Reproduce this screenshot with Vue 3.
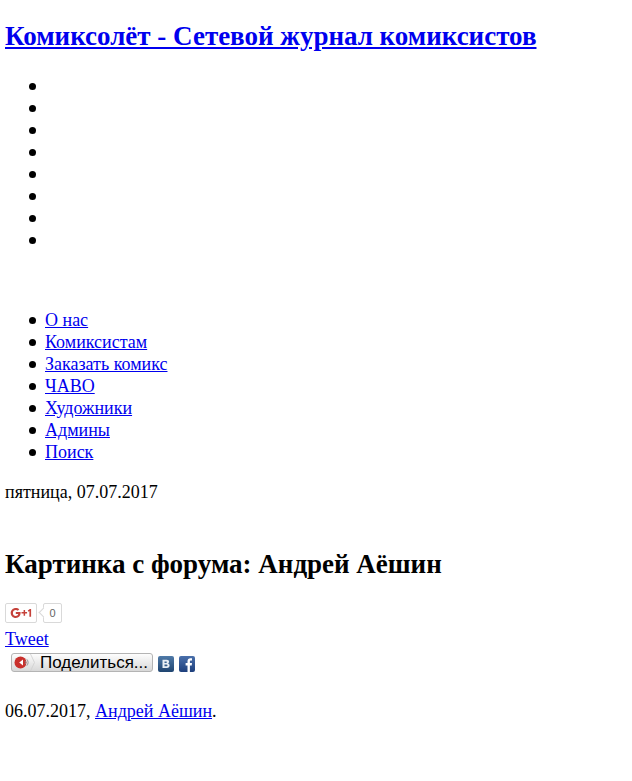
<script setup>
const navItems = ['О нас', 'Комиксистам', 'Заказать комикс', 'ЧАВО', 'Художники', 'Админы', 'Поиск']
const emptyItems = 8
</script>

<template>
  <div class="page">
    <h1 class="site-title"><a href="#">Комиксолёт - Сетевой журнал комиксистов</a></h1>

    <ul class="list list--empty">
      <li v-for="n in emptyItems" :key="n"></li>
    </ul>

    <ul class="list list--nav">
      <li v-for="item in navItems" :key="item"><a href="#">{{ item }}</a></li>
    </ul>

    <p class="date">пятница, 07.07.2017</p>

    <h2 class="post-title">Картинка с форума: Андрей Аёшин</h2>

    <div class="gplus">
      <span class="gplus-btn">
        <svg width="22" height="12" viewBox="0 0 22 12">
          <path d="M10.500 5H5.800v2.100h2.500C8 8.300 7 9 5.800 9 4.100 9 2.900 7.700 2.900 6S4.100 3 5.800 3c.8 0 1.500.3 2 .8l1.500-1.500C8.400 1.500 7.200 1 5.800 1 3 1 .7 3.200.7 6s2.300 5 5.100 5c3 0 4.800-2 4.800-4.900 0-.4 0-.7-.1-1.100z" fill="#c5413a"/>
          <path d="M11.500 5.100h2.100V3h1.500v2.100h2v1.500h-2v2.100h-1.500V6.600h-2.100z" fill="#c5413a"/>
          <path d="M17.800 3.400l2.100-1.300h1.200v7.700h-1.700V4.100l-1.100.7z" fill="#c5413a"/>
        </svg>
      </span>
      <span class="gplus-count">0</span>
    </div>

    <div class="tweet"><a href="#">Tweet</a></div>

    <div class="share">
      <span class="share-btn">
        <span class="share-logo">
          <svg width="24" height="17" viewBox="0 0 24 17">
            <circle cx="8.500" cy="8.500" r="6" fill="#c9302c"/>
            <path d="M11 5.500L7.200 8.500l3.800 3z" fill="#fff"/>
            <path d="M13 6.800a2.400 2.400 0 0 1 0 3.400M14.800 5.300a4.600 4.600 0 0 1 0 6.400" fill="none" stroke="#8a8a8a" stroke-width=".9"/>
            <path d="M18.500 0l4 8.500-4 8.500" fill="none" stroke="#cfcfcf" stroke-width=".8"/>
          </svg>
        </span>
        <span class="share-text">Поделиться...</span>
      </span>
      <svg class="soc" width="16" height="16" viewBox="0 0 16 16">
        <defs>
          <linearGradient id="vk" x1="0" y1="0" x2="0" y2="1">
            <stop offset="0" stop-color="#4f7aa8"/>
            <stop offset="1" stop-color="#1f4470"/>
          </linearGradient>
        </defs>
        <rect width="16" height="16" rx="2" fill="url(#vk)"/>
        <path d="M4.500 3.800h4.300c1.500 0 2.300.8 2.300 1.900 0 .8-.4 1.400-1.100 1.700 1 .2 1.600 1 1.600 2 0 1.400-1 2.500-2.700 2.500H4.500zm2 1.600v1.500h1.700c.5 0 .8-.3.800-.8s-.3-.7-.8-.7zm0 3v1.900h2c.6 0 1-.4 1-1s-.4-.9-1-.9z" fill="#e8eef5" fill-rule="evenodd"/>
      </svg>
      <svg class="soc" width="16" height="16" viewBox="0 0 16 16">
        <defs>
          <linearGradient id="fb" x1="0" y1="0" x2="0" y2="1">
            <stop offset="0" stop-color="#4a70ab"/>
            <stop offset="1" stop-color="#1d3f7c"/>
          </linearGradient>
        </defs>
        <rect width="16" height="16" rx="2" fill="url(#fb)"/>
        <path d="M8.500 16V9.500H6.600V7h1.900V5.300C8.500 3.300 9.700 2.200 11.400 2.200c.7 0 1.300.1 1.600.1v2.200h-1c-.9 0-1.100.5-1.100 1.100V7H13l-.3 2.500H10.900V16z" fill="#fff"/>
      </svg>
    </div>

    <p class="meta">06.07.2017, <a href="#">Андрей Аёшин</a>.</p>
  </div>
</template>

<style>
body {
  margin: 0;
  background: #fff;
}
</style>

<style scoped>
.page {
  padding: 0 5px;
  font-family: "Liberation Serif", "Times New Roman", serif;
  font-size: 18px;
  line-height: 22px;
  color: #000;
}

a {
  color: #0000ee;
}

.site-title {
  margin: 0;
  padding-top: 20px;
  font-size: 27px;
  line-height: 32px;
}

.list {
  margin: 0;
  padding-left: 40px;
  list-style: none;
}

.list li {
  position: relative;
  height: 22px;
}

.list li::before {
  content: "";
  position: absolute;
  left: -16px;
  top: 8px;
  width: 7px;
  height: 7px;
  border-radius: 50%;
  background: #000;
}

.list--empty {
  margin-top: 23px;
}

.list--nav {
  margin-top: 58px;
}

.date {
  margin: 18px 0 0;
}

.post-title {
  margin: 45px 0 0;
  font-size: 27px;
  line-height: 32px;
}

.gplus {
  display: flex;
  margin-top: 23px;
  height: 20px;
}

.gplus-btn {
  display: flex;
  align-items: center;
  justify-content: center;
  box-sizing: border-box;
  width: 32px;
  height: 20px;
  border: 1px solid #d9d9d9;
  border-radius: 2px;
}

.gplus-count {
  position: relative;
  box-sizing: border-box;
  width: 19px;
  height: 20px;
  margin-left: 6px;
  border: 1px solid #d9d9d9;
  border-radius: 2px;
  font-family: "Liberation Sans", Arial, sans-serif;
  font-size: 11px;
  line-height: 18px;
  text-align: center;
  color: #666;
}

.gplus-count::before {
  content: "";
  position: absolute;
  left: -4px;
  top: 5px;
  width: 6px;
  height: 6px;
  background: #fff;
  border-left: 1px solid #d9d9d9;
  border-bottom: 1px solid #d9d9d9;
  transform: rotate(45deg);
}

.tweet {
  margin-top: 5px;
}

.share {
  display: flex;
  align-items: center;
  gap: 5px;
  margin-top: 3px;
  padding-left: 6px;
}

.share-btn {
  display: flex;
  align-items: center;
  box-sizing: border-box;
  width: 142px;
  height: 19px;
  border: 1px solid #b4b4b4;
  border-radius: 3px;
  background: linear-gradient(#fdfdfd, #d8d8d8);
  font-family: "Liberation Sans", Arial, sans-serif;
  font-size: 17px;
  line-height: 17px;
  color: #000;
}

.share-logo {
  display: flex;
  width: 28px;
  flex: none;
}

.soc {
  margin-top: 2px;
}

.meta {
  margin: 28px 0 0;
}
</style>
